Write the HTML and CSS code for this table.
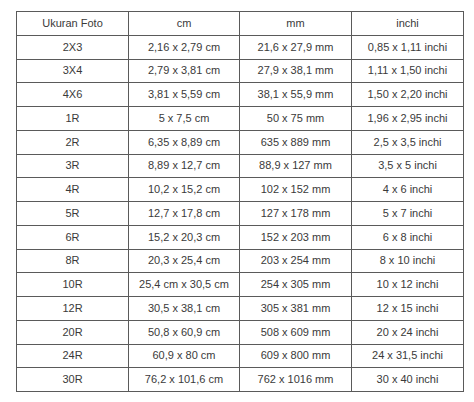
FILE: index.html
```html
<!DOCTYPE html>
<html>
<head>
<meta charset="utf-8">
<link rel="stylesheet" href="styles.css">
</head>
<body>
<table class="size-table">
<colgroup><col class="c1"><col class="c2"><col class="c3"><col class="c4"></colgroup>
<tr><td>Ukuran Foto</td><td>cm</td><td>mm</td><td>inchi</td></tr>
<tr><td>2X3</td><td>2,16 x 2,79 cm</td><td>21,6 x 27,9 mm</td><td>0,85 x 1,11 inchi</td></tr>
<tr><td>3X4</td><td>2,79 x 3,81 cm</td><td>27,9 x 38,1 mm</td><td>1,11 x 1,50 inchi</td></tr>
<tr><td>4X6</td><td>3,81 x 5,59 cm</td><td>38,1 x 55,9 mm</td><td>1,50 x 2,20 inchi</td></tr>
<tr><td>1R</td><td>5 x 7,5 cm</td><td>50 x 75 mm</td><td>1,96 x 2,95 inchi</td></tr>
<tr><td>2R</td><td>6,35 x 8,89 cm</td><td>635 x 889 mm</td><td>2,5 x 3,5 inchi</td></tr>
<tr><td>3R</td><td>8,89 x 12,7 cm</td><td>88,9 x 127 mm</td><td>3,5 x 5 inchi</td></tr>
<tr><td>4R</td><td>10,2 x 15,2 cm</td><td>102 x 152 mm</td><td>4 x 6 inchi</td></tr>
<tr><td>5R</td><td>12,7 x 17,8 cm</td><td>127 x 178 mm</td><td>5 x 7 inchi</td></tr>
<tr><td>6R</td><td>15,2 x 20,3 cm</td><td>152 x 203 mm</td><td>6 x 8 inchi</td></tr>
<tr><td>8R</td><td>20,3 x 25,4 cm</td><td>203 x 254 mm</td><td>8 x 10 inchi</td></tr>
<tr><td>10R</td><td>25,4 cm x 30,5 cm</td><td>254 x 305 mm</td><td>10 x 12 inchi</td></tr>
<tr><td>12R</td><td>30,5 x 38,1 cm</td><td>305 x 381 mm</td><td>12 x 15 inchi</td></tr>
<tr><td>20R</td><td>50,8 x 60,9 cm</td><td>508 x 609 mm</td><td>20 x 24 inchi</td></tr>
<tr><td>24R</td><td>60,9 x 80 cm</td><td>609 x 800 mm</td><td>24 x 31,5 inchi</td></tr>
<tr><td>30R</td><td>76,2 x 101,6 cm</td><td>762 x 1016 mm</td><td>30 x 40 inchi</td></tr>
</table>
</body>
</html>
```
FILE: styles.css
```css
html, body {
  background: #ffffff;
}
body {
  margin: 0;
  padding: 11px 0 0 16px;
  font-family: "Liberation Sans", Arial, sans-serif;
  font-size: 11px;
  color: #3a3a3a;
}
.size-table {
  border-collapse: collapse;
  table-layout: fixed;
  width: 447px;
}
.c1 { width: 112px; }
.c2 { width: 111px; }
.c3 { width: 112px; }
.c4 { width: 112px; }
.size-table td {
  border: 1px solid #5a5a5a;
  text-align: center;
  vertical-align: middle;
  height: 23.75px;
  padding: 0 4px;
  line-height: 13px;
  box-sizing: border-box;
}
```
